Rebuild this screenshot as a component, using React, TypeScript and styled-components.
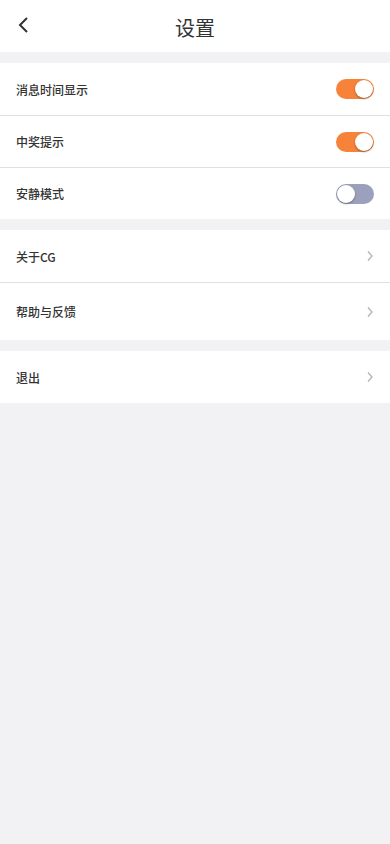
import styled, { createGlobalStyle } from "styled-components"

const Global = createGlobalStyle`
  html, body {
    margin: 0;
    padding: 0;
    background: #f2f2f4;
    font-family: "Noto Sans CJK SC", "Noto Sans", sans-serif;
  }
`

const Page = styled.div`
  min-height: 844px;
  background: #f2f2f4;
`

const Header = styled.header`
  height: 52px;
  background: #fff;
  display: flex;
  align-items: center;
  justify-content: center;
  position: relative;
  margin-bottom: 11px;
  h1 {
    margin: 0;
    font-size: 20px;
    font-weight: 400;
    color: #333;
    padding-top: 3px;
  }
`

const Back = styled.button`
  position: absolute;
  left: 10px;
  top: 11px;
  width: 28px;
  height: 28px;
  border: none;
  background: none;
  padding: 0;
  display: flex;
  align-items: center;
  justify-content: center;
`

const Group = styled.section`
  background: #fff;
  margin-bottom: 11px;
`

const Row = styled.div<{ $tall?: boolean }>`
  height: ${(p) => (p.$tall ? 58 : 52)}px;
  box-sizing: border-box;
  display: flex;
  align-items: center;
  justify-content: space-between;
  padding: 0 16px;
  & + & {
    border-top: 1px solid #e0e0e0;
  }
  span {
    font-size: 12px;
    font-weight: 500;
    color: #333;
  }
`

const Toggle = styled.div<{ $on: boolean }>`
  width: 38px;
  height: 20px;
  border-radius: 10px;
  background: ${(p) => (p.$on ? "#f7823a" : "#9ba0bd")};
  display: flex;
  align-items: center;
  justify-content: ${(p) => (p.$on ? "flex-end" : "flex-start")};
  padding: 0 1px;
  box-sizing: border-box;
  &::after {
    content: "";
    width: 18px;
    height: 18px;
    border-radius: 50%;
    background: #fff;
    box-shadow: 0 1px 2px rgba(0, 0, 0, 0.35);
  }
`

const Chevron = () => (
  <svg width="8" height="12" viewBox="0 0 8 12">
    <path d="M2 1.5 L6 6 L2 10.5" fill="none" stroke="#b3b3b3" strokeWidth="1.3" />
  </svg>
)

const toggles = [
  { label: "消息时间显示", on: true },
  { label: "中奖提示", on: true },
  { label: "安静模式", on: false },
]

export default function App() {
  return (
    <Page>
      <Global />
      <Header>
        <Back aria-label="返回">
          <svg width="14" height="18" viewBox="0 0 14 18">
            <path d="M10 2 L3 9 L10 16" fill="none" stroke="#333" strokeWidth="2" />
          </svg>
        </Back>
        <h1>设置</h1>
      </Header>
      <Group>
        {toggles.map((t) => (
          <Row key={t.label}>
            <span>{t.label}</span>
            <Toggle $on={t.on} />
          </Row>
        ))}
      </Group>
      <Group>
        <Row>
          <span>关于CG</span>
          <Chevron />
        </Row>
        <Row $tall>
          <span>帮助与反馈</span>
          <Chevron />
        </Row>
      </Group>
      <Group>
        <Row>
          <span>退出</span>
          <Chevron />
        </Row>
      </Group>
    </Page>
  )
}
